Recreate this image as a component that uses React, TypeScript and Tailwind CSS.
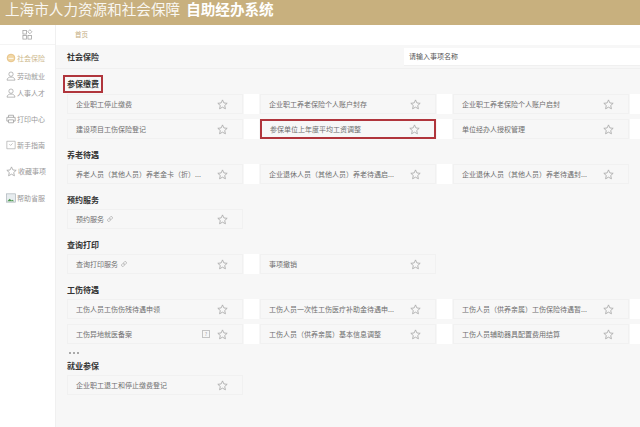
import { Link } from 'lucide-react';

const font = '[font-family:"Noto_Sans_CJK_SC","Liberation_Sans",sans-serif]';

const nav = [
  { label: '社会保险', icon: 'coin', gap: 'h-[8px]', active: true },
  { label: '劳动就业', icon: 'worker', gap: 'h-[7px]' },
  { label: '人事人才', icon: 'person', gap: 'h-[16px]' },
  { label: '打印中心', icon: 'printer', gap: 'h-[16px]' },
  { label: '新手指南', icon: 'guide', gap: 'h-[16px]' },
  { label: '收藏事项', icon: 'star', gap: 'h-[17px]' },
  { label: '帮助省服', icon: 'image', gap: 'h-[10px]' },
];

type Item = { text: string; link?: boolean; note?: boolean; marked?: boolean };

// gutter: the white strip after the last card is only there on some rows
const sections: { title: string; marked?: boolean; rows: { items: Item[]; tail?: boolean }[]; more?: boolean }[] = [
  {
    title: '参保缴费',
    marked: true,
    rows: [
      { tail: true, items: [{ text: '企业职工停止缴费' }, { text: '企业职工养老保险个人账户封存' }, { text: '企业职工养老保险个人账户启封' }] },
      { tail: true, items: [{ text: '建设项目工伤保险登记' }, { text: '参保单位上年度平均工资调整', marked: true }, { text: '单位经办人授权管理' }] },
    ],
  },
  {
    title: '养老待遇',
    rows: [{ items: [{ text: '养老人员（其他人员）养老金卡（折）...' }, { text: '企业退休人员（其他人员）养老待遇启...' }, { text: '企业退休人员（其他人员）养老待遇封...' }] }],
  },
  {
    title: '预约服务',
    rows: [{ items: [{ text: '预约服务', link: true }] }],
  },
  {
    title: '查询打印',
    rows: [{ items: [{ text: '查询打印服务', link: true }, { text: '事项撤销' }] }],
  },
  {
    title: '工伤待遇',
    more: true,
    rows: [
      { tail: true, items: [{ text: '工伤人员工伤伤残待遇申领' }, { text: '工伤人员一次性工伤医疗补助金待遇申...' }, { text: '工伤人员（供养亲属）工伤保险待遇暂...' }] },
      { tail: true, items: [{ text: '工伤异地就医备案', note: true }, { text: '工伤人员（供养亲属）基本信息调整' }, { text: '工伤人员辅助器具配置费用结算' }] },
    ],
  },
  {
    title: '就业参保',
    rows: [{ items: [{ text: '企业职工退工和停止缴费登记' }] }],
  },
];

function Star() {
  return (
    <svg viewBox="0 0 12 12" className="w-[11px] h-[11px] shrink-0" fill="none" stroke="#a8a8a8" strokeWidth="0.9" strokeLinejoin="round">
      <path d="M6 1l1.5 3.3 3.6.4-2.7 2.4.8 3.6L6 8.9l-3.2 1.8.8-3.6L.9 4.7l3.6-.4z" />
    </svg>
  );
}

function NavIcon({ name }: { name: string }) {
  const cls = 'w-[10px] h-[10px] shrink-0';
  if (name === 'coin') {
    return (
      <svg viewBox="0 0 12 12" className={cls} fill="#f1d7a6" stroke="#e5bd7c" strokeWidth="1">
        <circle cx="6" cy="6" r="4.6" />
        <path d="M3 6.5h6" stroke="#fff" />
      </svg>
    );
  }
  if (name === 'worker' || name === 'person') {
    return (
      <svg viewBox="0 0 12 12" className={cls} fill="none" stroke="#9a9a9a" strokeWidth="0.8">
        <circle cx="6" cy="3.8" r="2.6" />
        <path d="M1.2 11c.3-2.6 2-3.7 4.8-3.7s4.5 1.1 4.8 3.7z" />
      </svg>
    );
  }
  if (name === 'printer') {
    return (
      <svg viewBox="0 0 12 12" className={cls} fill="none" stroke="#9a9a9a" strokeWidth="0.9">
        <path d="M3 4V1.5h6V4M3 8.5H1V4h10v4.5H9M3 7h6v3.5H3z" />
      </svg>
    );
  }
  if (name === 'guide') {
    return (
      <svg viewBox="0 0 12 12" className={cls} fill="none" stroke="#a8a8a8" strokeWidth="0.8">
        <path d="M1 1.5h10v9H1zM4 5l1.5 1.5L8 4" />
      </svg>
    );
  }
  if (name === 'star') return <Star />;
  return (
    <svg viewBox="0 0 12 12" className={cls}>
      <rect x="0.5" y="1" width="11" height="10" fill="#e8edf0" stroke="#a9b1b8" strokeWidth="0.8" />
      <path d="M1.5 10l3-3 2 2 1-1 2.5 2z" fill="#4f9a52" />
    </svg>
  );
}

function Card({ item, gutter }: { item: Item; gutter: boolean }) {
  return (
    <div className="flex w-[193px] shrink-0">
      <div className={`w-[176px] h-[20px] flex items-center pl-[8px] pr-[14px] bg-[#f7f7f7] ${item.marked ? 'border-2 border-[#b0353c]' : 'border border-[#f1f1f1]'}`}>
        <span className="flex-1 min-w-0 flex items-center text-[7px] leading-[12px] text-[#6e6e6e] whitespace-nowrap">
          {item.text}
          {item.link && <Link className="ml-[3px] w-[6px] h-[6px] text-[#888]" strokeWidth={2} />}
        </span>
        {item.note && (
          <span className="w-[8px] h-[8px] mr-[7px] border border-[#c4c4c4] text-[5px] leading-[6px] text-center text-[#aaa]">?</span>
        )}
        <Star />
      </div>
      {gutter && <div className="ml-px w-[15px] h-[20px] bg-white" />}
    </div>
  );
}

export default function App() {
  return (
    <div className={`w-[640px] h-[427px] overflow-hidden flex flex-col bg-[#f7f7f7] ${font}`}>
      <header className="h-[25px] shrink-0 bg-[#c8b07e] pl-[5px] pb-[8px] text-white flex items-center">
        <span className="text-[14.6px] leading-[16px] opacity-90 whitespace-nowrap">上海市人力资源和社会保障</span>
        <span className="ml-[6px] text-[14.6px] leading-[16px] font-bold whitespace-nowrap">自助经办系统</span>
      </header>

      <div className="flex-1 flex min-h-0">
        <aside className="w-[56px] shrink-0 bg-white border-r border-[#f0f0f0]">
          <div className="h-[20px] flex items-center justify-center border-b border-[#f4f4f4]">
            <svg viewBox="0 0 12 12" className="w-[11px] h-[11px]" fill="none" stroke="#9c9c9c" strokeWidth="0.8">
              <rect x="1" y="1.5" width="4" height="4" />
              <rect x="1" y="7" width="4" height="4" />
              <rect x="6.5" y="7" width="4" height="4" />
              <path d="M8.6.8l2.2 2.2-2.2 2.2L6.4 3z" />
            </svg>
          </div>
          <nav className="pt-[8px] pl-[6px]">
            {nav.map((n) => (
              <div key={n.label}>
                <div className={`h-[10px] flex items-center gap-[1px] text-[7px] leading-[10px] whitespace-nowrap ${n.active ? 'text-[#cdb98e]' : 'text-[#999]'}`}>
                  <NavIcon name={n.icon} />
                  {n.label}
                </div>
                <div className={n.gap} />
              </div>
            ))}
          </nav>
        </aside>

        <main className="flex-1 min-w-0 flex flex-col">
          <div className="h-[20px] shrink-0 bg-white pl-[19px] flex items-center text-[6.5px] text-[#c3ab7c]">首页</div>
          <div className="h-[24px] shrink-0 flex items-center justify-between pl-[11px] border-b border-[#f0f0f0]">
            <h1 className="text-[8px] font-bold text-[#333]">社会保险</h1>
            <div className="w-[236px] h-[18px] flex items-center pl-[5px] bg-white text-[7px] text-[#555] border-b border-[#f0f0f0]">请输入事项名称</div>
          </div>

          <div className="pl-[11px] pt-[6px]">
            {sections.map((s) => (
              <section key={s.title}>
                <h2 className="h-[19px] flex items-center">
                  <span className={`text-[8px] leading-[12px] font-bold text-[#333] ${s.marked ? 'border-2 border-[#b0353c] px-[2px] py-[1px] -ml-[4px] mb-[2px]' : ''}`}>{s.title}</span>
                </h2>
                <div className="flex flex-col gap-[5px]">
                  {s.rows.map((row, i) => (
                    <div key={i} className="flex">
                      {row.items.map((item, j) => (
                        <Card key={item.text} item={item} gutter={j < row.items.length - 1 || !!row.tail} />
                      ))}
                    </div>
                  ))}
                </div>
                {s.more ? (
                  <div className="h-[12px] pl-[2px] pt-[8px] flex gap-[2px]">
                    <span className="w-[2px] h-[2px] bg-[#aaa]" />
                    <span className="w-[2px] h-[2px] bg-[#aaa]" />
                    <span className="w-[2px] h-[2px] bg-[#aaa]" />
                  </div>
                ) : (
                  <div className="h-[6px]" />
                )}
              </section>
            ))}
          </div>
        </main>
      </div>
    </div>
  );
}
